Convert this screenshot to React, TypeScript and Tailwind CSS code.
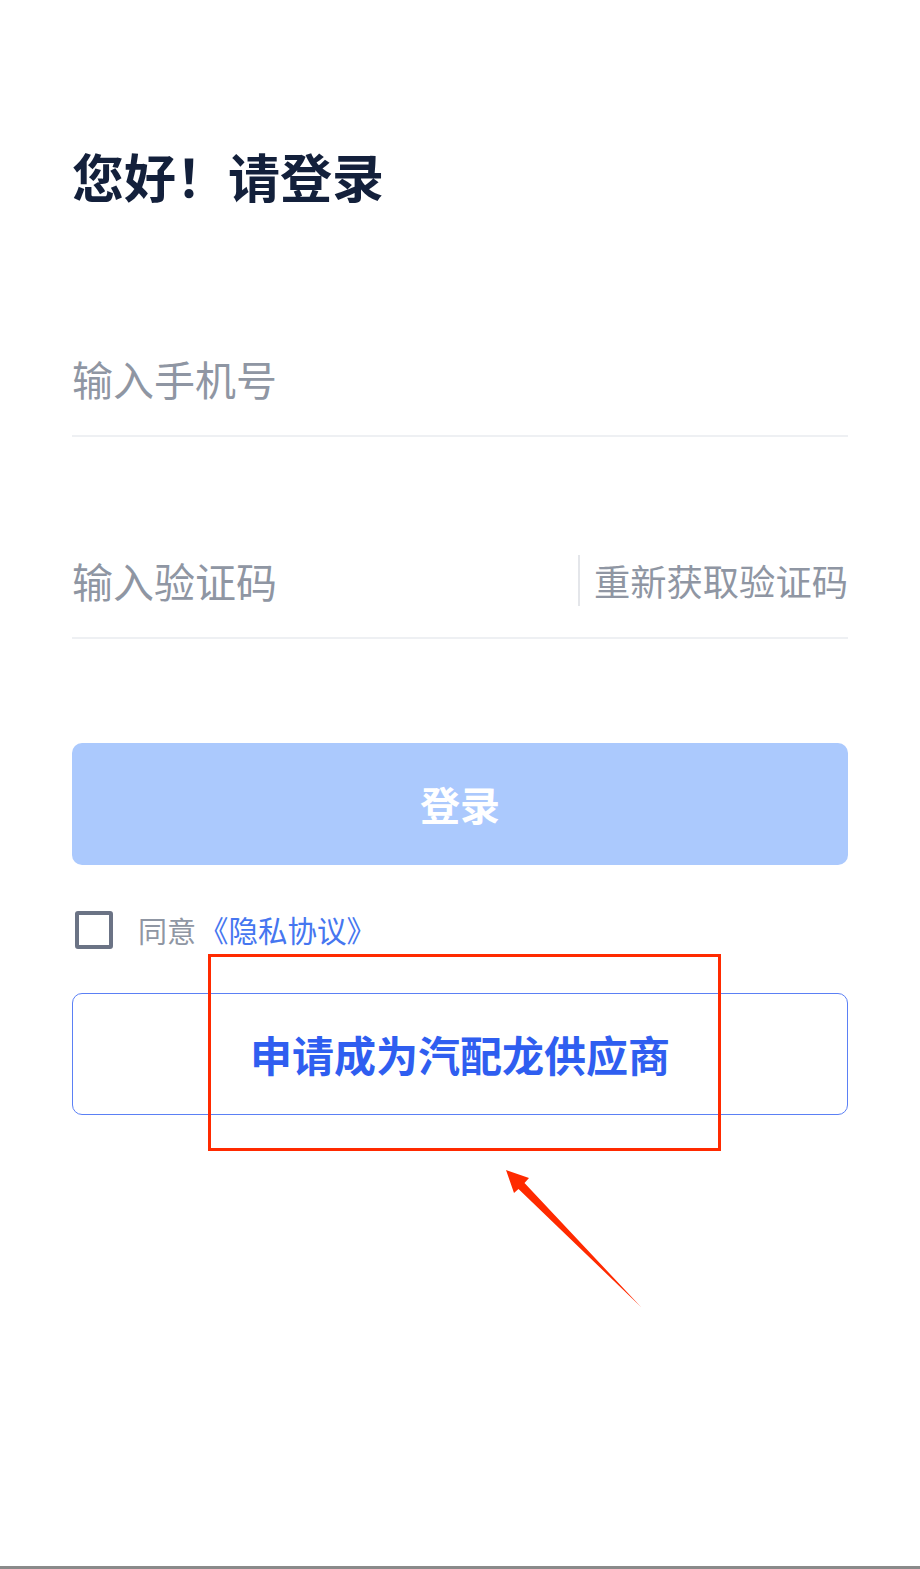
import React from 'react';

const font = { fontFamily: '"Noto Sans CJK SC", "Noto Sans", sans-serif' };

const App = () => {
  return (
    <div
      style={font}
      className="relative w-[920px] h-[1569px] bg-white border-b-[3px] border-[#8a8a8a] px-[72px] flex flex-col overflow-hidden"
    >
      {/* Title */}
      <h1 className="mt-[150px] text-[52px] leading-none font-bold text-[#13203b]">
        您好！请登录
      </h1>

      {/* Phone */}
      <div className="mt-[133px] h-[102px] border-b-2 border-[#eef0f3] flex items-center pb-[14px]">
        <span className="text-[41px] leading-none text-[#8f96a3]">输入手机号</span>
      </div>

      {/* Code */}
      <div className="mt-[100px] h-[102px] border-b-2 border-[#eef0f3] flex items-center pb-[14px]">
        <span className="flex-1 text-[41px] leading-none text-[#8f96a3]">输入验证码</span>
        <div className="w-[2px] h-[51px] bg-[#e4e6ea] mr-[14px]" />
        <span className="text-[36.3px] leading-none text-[#8f96a3]">重新获取验证码</span>
      </div>

      {/* Login */}
      <button className="mt-[104px] h-[122px] w-full rounded-[10px] bg-[#abc9fd] text-white text-[40px] font-bold leading-none">
        登录
      </button>

      {/* Agreement */}
      <div className="mt-[46px] h-[38px] flex items-center">
        <div className="w-[38px] h-[38px] ml-[3px] rounded-[3px] border-[4px] border-[#6b7385]" />
        <span className="ml-[25px] text-[29px] leading-none text-[#8f96a3]">同意</span>
        <span className="ml-[3px] text-[29.5px] leading-none text-[#4676f0]">《隐私协议》</span>
      </div>

      {/* Apply */}
      <button className="mt-[44px] h-[122px] w-full rounded-[10px] border-[1.5px] border-[#5b80f5] text-[#2f5ef0] text-[42px] font-bold leading-none">
        申请成为汽配龙供应商
      </button>

      {/* annotation overlay */}
      <div className="absolute left-[208px] top-[954px] w-[513px] h-[197px] border-[3px] border-[#ff2a00] pointer-events-none" />
      <svg
        className="absolute left-0 top-0 pointer-events-none"
        width="920"
        height="1569"
        viewBox="0 0 920 1569"
      >
        <polygon
          points="506,1170 529,1178 524.5,1183 641,1307 518.5,1189 514,1193"
          fill="#ff2a00"
        />
      </svg>
    </div>
  );
};

export default App;
